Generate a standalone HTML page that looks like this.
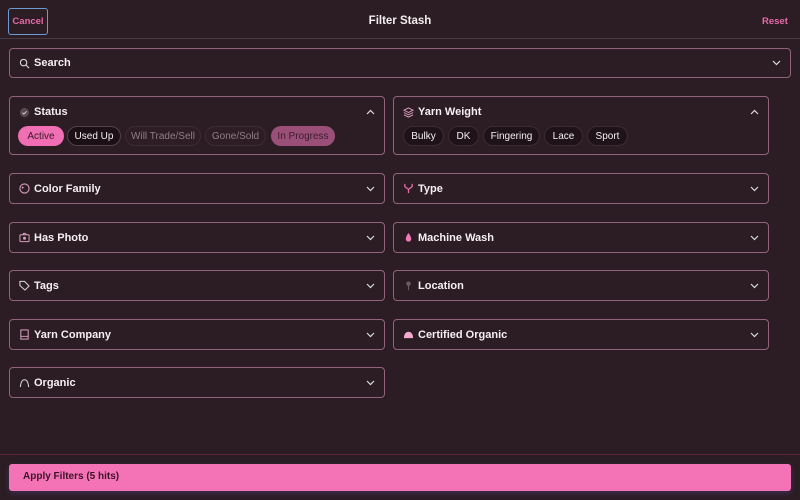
<!DOCTYPE html>
<html><head><meta charset="utf-8"><style>
*{box-sizing:border-box;margin:0;padding:0}
body{width:800px;height:500px;background:#2b1d23;font-family:"Liberation Sans",sans-serif;position:relative;overflow:hidden;color:#f3eef0}
.abs{position:absolute}
.box{position:absolute;border:1px solid #93637b;border-radius:4px}
.lbl{position:absolute;left:24px;font-size:11px;font-weight:bold;color:#f5eff2}
.ic{position:absolute;left:9px;width:11px;height:11px}
.chev{position:absolute;right:9px;width:9px;height:6px}
.chip{position:absolute;height:20px;border-radius:10px;font-size:10px;line-height:21px;text-align:center}
.b{line-height:19px}
</style></head><body>
<div class="abs" style="left:8px;top:8px;width:40px;height:27px;border:1.5px solid #6d9ad4;border-radius:3px;color:#e76aa9;font-size:9.5px;font-weight:bold;line-height:26px;text-align:center">Cancel</div>
<div class="abs" style="left:0;width:800px;top:15px;text-align:center;font-size:11.5px;font-weight:bold">Filter Stash</div>
<div class="abs" style="left:762px;top:16px;color:#e76aa9;font-size:9.5px;font-weight:bold">Reset</div>
<div class="abs" style="left:0;top:38px;width:800px;height:1px;background:#4a3a44"></div>

<div class="box" style="left:9px;top:48px;width:782px;height:30px">
<svg class="ic" style="top:9px" viewBox="0 0 12 12"><circle cx="5" cy="5" r="3.5" fill="none" stroke="#ddd" stroke-width="1.2"/><path d="M7.6 7.6L11 11" stroke="#ddd" stroke-width="1.2"/></svg>
<div class="lbl" style="top:8px">Search</div>
<svg class="chev" style="top:11px" viewBox="0 0 9 6"><path d="M1 1l3.5 3.5L8 1" fill="none" stroke="#ddd" stroke-width="1.2"/></svg></div>

<div class="box" style="left:9px;top:96px;width:376px;height:59px">
<svg class="ic" style="top:10px" viewBox="0 0 12 12"><circle cx="6" cy="6" r="5" fill="#5a4650"/><path d="M3.8 6.2l1.5 1.5 3-3" fill="none" stroke="#ddd" stroke-width="1"/></svg>
<div class="lbl" style="top:9px">Status</div>
<svg class="chev" style="top:12px" viewBox="0 0 9 6"><path d="M1 5l3.5-3.5L8 5" fill="none" stroke="#ddd" stroke-width="1.2"/></svg>
<div class="chip" style="left:8px;top:29px;width:46px;background:#f06eb3;color:#3a1a2a">Active</div>
<div class="chip b" style="left:57px;top:29px;width:54px;background:#1c0f15;border:1px solid #55404a;color:#f3eef0">Used Up</div>
<div class="chip b" style="left:115px;top:29px;width:76px;background:#2f1d25;border:1px solid #3e2a33;color:#8d7e85">Will Trade/Sell</div>
<div class="chip b" style="left:195px;top:29px;width:61px;background:#2f1d25;border:1px solid #3e2a33;color:#8d7e85">Gone/Sold</div>
<div class="chip" style="left:261px;top:29px;width:64px;background:#9a4f78;color:#3b1c2d">In Progress</div>
</div>

<div class="box" style="left:393px;top:96px;width:376px;height:59px">
<svg class="ic" style="top:10px" viewBox="0 0 12 12"><path d="M6 1L11 3.5 6 6 1 3.5z M1 6l5 2.5L11 6 M1 8.5l5 2.5 5-2.5" fill="none" stroke="#d9a0c0" stroke-width="1"/></svg>
<div class="lbl" style="top:9px">Yarn Weight</div>
<svg class="chev" style="top:12px" viewBox="0 0 9 6"><path d="M1 5l3.5-3.5L8 5" fill="none" stroke="#ddd" stroke-width="1.2"/></svg>
<div class="chip b" style="left:9px;top:29px;width:41px;background:#1f1218;border:1px solid #3e2a33">Bulky</div>
<div class="chip b" style="left:54px;top:29px;width:31px;background:#1f1218;border:1px solid #3e2a33">DK</div>
<div class="chip b" style="left:89px;top:29px;width:57px;background:#1f1218;border:1px solid #3e2a33">Fingering</div>
<div class="chip b" style="left:150px;top:29px;width:39px;background:#1f1218;border:1px solid #3e2a33">Lace</div>
<div class="chip b" style="left:193px;top:29px;width:41px;background:#1f1218;border:1px solid #3e2a33">Sport</div>
</div>

<div class="box" style="left:9px;top:173px;width:376px;height:31px"><svg class="ic" style="top:9px" viewBox="0 0 12 12"><circle cx="6" cy="6" r="5" fill="none" stroke="#d9a0c0" stroke-width="1.2"/><circle cx="4" cy="5" r="1" fill="#d9a0c0"/></svg><div class="lbl" style="top:9px">Color Family</div><svg class="chev" style="top:12px" viewBox="0 0 9 6"><path d="M1 1l3.5 3.5L8 1" fill="none" stroke="#ddd" stroke-width="1.2"/></svg></div>
<div class="box" style="left:393px;top:173px;width:376px;height:31px"><svg class="ic" style="top:9px" viewBox="0 0 12 12"><path d="M2 1v3l4 3v4M10 1v3L6 7" fill="none" stroke="#e76aa9" stroke-width="1.4"/></svg><div class="lbl" style="top:9px">Type</div><svg class="chev" style="top:12px" viewBox="0 0 9 6"><path d="M1 1l3.5 3.5L8 1" fill="none" stroke="#ddd" stroke-width="1.2"/></svg></div>

<div class="box" style="left:9px;top:222px;width:376px;height:31px"><svg class="ic" style="top:9px" viewBox="0 0 12 12"><rect x="1" y="3" width="10" height="7.5" rx="1" fill="none" stroke="#d9a0c0" stroke-width="1.1"/><circle cx="6" cy="6.8" r="1.6" fill="#d9a0c0"/><path d="M4 3l1-1.5h2L8 3" fill="none" stroke="#d9a0c0"/></svg><div class="lbl" style="top:9px">Has Photo</div><svg class="chev" style="top:12px" viewBox="0 0 9 6"><path d="M1 1l3.5 3.5L8 1" fill="none" stroke="#ddd" stroke-width="1.2"/></svg></div>
<div class="box" style="left:393px;top:222px;width:376px;height:31px"><svg class="ic" style="top:9px" viewBox="0 0 12 12"><path d="M6 1C4 4 3 6 3 7.5a3 3 0 006 0C9 6 8 4 6 1z" fill="#f07ab8"/></svg><div class="lbl" style="top:9px">Machine Wash</div><svg class="chev" style="top:12px" viewBox="0 0 9 6"><path d="M1 1l3.5 3.5L8 1" fill="none" stroke="#ddd" stroke-width="1.2"/></svg></div>

<div class="box" style="left:9px;top:270px;width:376px;height:31px"><svg class="ic" style="top:9px" viewBox="0 0 12 12"><path d="M1 1.5h5l5 5-4.5 4.5-5.5-5z" fill="none" stroke="#ddd" stroke-width="1.1"/></svg><div class="lbl" style="top:9px">Tags</div><svg class="chev" style="top:12px" viewBox="0 0 9 6"><path d="M1 1l3.5 3.5L8 1" fill="none" stroke="#ddd" stroke-width="1.2"/></svg></div>
<div class="box" style="left:393px;top:270px;width:376px;height:31px"><svg class="ic" style="top:9px" viewBox="0 0 12 12"><circle cx="6" cy="4" r="2.5" fill="#6a5a62"/><path d="M6 6v5" stroke="#6a5a62" stroke-width="1.2"/></svg><div class="lbl" style="top:9px">Location</div><svg class="chev" style="top:12px" viewBox="0 0 9 6"><path d="M1 1l3.5 3.5L8 1" fill="none" stroke="#ddd" stroke-width="1.2"/></svg></div>

<div class="box" style="left:9px;top:319px;width:376px;height:31px"><svg class="ic" style="top:9px" viewBox="0 0 12 12"><rect x="2" y="1" width="8" height="10" fill="none" stroke="#d9a0c0" stroke-width="1.1"/><path d="M2 8h8" stroke="#d9a0c0"/></svg><div class="lbl" style="top:9px">Yarn Company</div><svg class="chev" style="top:12px" viewBox="0 0 9 6"><path d="M1 1l3.5 3.5L8 1" fill="none" stroke="#ddd" stroke-width="1.2"/></svg></div>
<div class="box" style="left:393px;top:319px;width:376px;height:31px"><svg class="ic" style="top:9px" viewBox="0 0 12 12"><path d="M1 10C1 5 3.5 3 6 3s5 2 5 7z" fill="#f3a8cf"/></svg><div class="lbl" style="top:9px">Certified Organic</div><svg class="chev" style="top:12px" viewBox="0 0 9 6"><path d="M1 1l3.5 3.5L8 1" fill="none" stroke="#ddd" stroke-width="1.2"/></svg></div>

<div class="box" style="left:9px;top:367px;width:376px;height:31px"><svg class="ic" style="top:9px" viewBox="0 0 12 12"><path d="M1.5 11C2 5 4 3 6 3s4 2 4.5 8" fill="none" stroke="#ddd" stroke-width="1.1"/></svg><div class="lbl" style="top:9px">Organic</div><svg class="chev" style="top:12px" viewBox="0 0 9 6"><path d="M1 1l3.5 3.5L8 1" fill="none" stroke="#ddd" stroke-width="1.2"/></svg></div>

<div class="abs" style="left:0;top:454px;width:800px;height:1px;background:#5a2436"></div>
<div class="abs" style="left:9px;top:464px;width:782px;height:27px;background:#f472b6;border-radius:3px;color:#3a1326;font-size:10px;font-weight:bold;line-height:25px;padding-left:14px;box-shadow:0 2px 6px rgba(90,60,140,.5)">Apply Filters (5 hits)</div>
</body></html>
